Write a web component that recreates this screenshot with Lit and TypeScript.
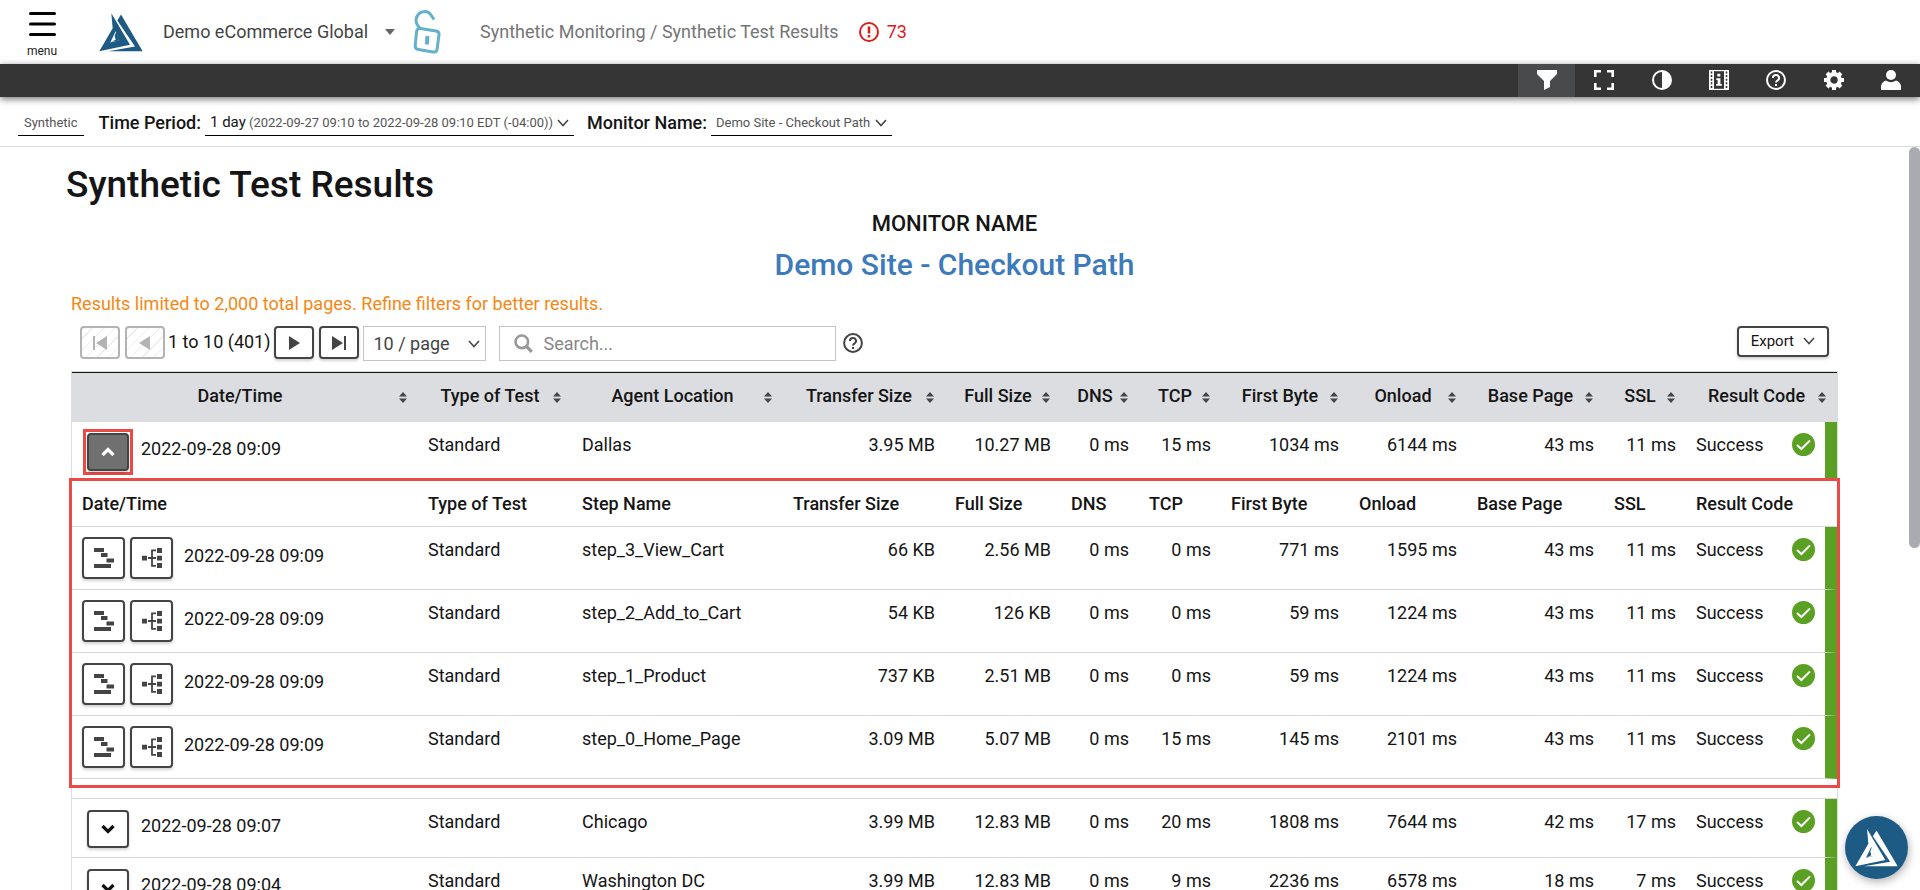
import { LitElement, html, svg, css, nothing } from "lit";
import { customElement, state } from "lit/decorators.js";

interface Result {
  time: string;
  type: string;
  name: string;
  values: string[];
  code: string;
  steps?: Result[];
}

const row = (time: string, name: string, values: string[], steps?: Result[]): Result => ({
  time,
  type: "Standard",
  name,
  values,
  code: "Success",
  steps,
});

const COLUMNS = [
  { label: "Date/Time", width: 346 },
  { label: "Type of Test", width: 154 },
  { label: "Agent Location", width: 211 },
  { label: "Transfer Size", width: 162 },
  { label: "Full Size", width: 116 },
  { label: "DNS", width: 78 },
  { label: "TCP", width: 82 },
  { label: "First Byte", width: 128 },
  { label: "Onload", width: 118 },
  { label: "Base Page", width: 137 },
  { label: "SSL", width: 82 },
  { label: "Result Code", width: 151 },
];

const RESULTS: Result[] = [
  row("2022-09-28 09:09", "Dallas", ["3.95 MB", "10.27 MB", "0 ms", "15 ms", "1034 ms", "6144 ms", "43 ms", "11 ms"], [
    row("2022-09-28 09:09", "step_3_View_Cart", ["66 KB", "2.56 MB", "0 ms", "0 ms", "771 ms", "1595 ms", "43 ms", "11 ms"]),
    row("2022-09-28 09:09", "step_2_Add_to_Cart", ["54 KB", "126 KB", "0 ms", "0 ms", "59 ms", "1224 ms", "43 ms", "11 ms"]),
    row("2022-09-28 09:09", "step_1_Product", ["737 KB", "2.51 MB", "0 ms", "0 ms", "59 ms", "1224 ms", "43 ms", "11 ms"]),
    row("2022-09-28 09:09", "step_0_Home_Page", ["3.09 MB", "5.07 MB", "0 ms", "15 ms", "145 ms", "2101 ms", "43 ms", "11 ms"]),
  ]),
  row("2022-09-28 09:07", "Chicago", ["3.99 MB", "12.83 MB", "0 ms", "20 ms", "1808 ms", "7644 ms", "42 ms", "17 ms"]),
  row("2022-09-28 09:04", "Washington DC", ["3.99 MB", "12.83 MB", "0 ms", "9 ms", "2236 ms", "6578 ms", "18 ms", "7 ms"]),
];

const logoShape = svg`
  <path fill-rule="evenodd" d="M1 114 L41 45 L37 0 L93 95 Z M34 88 L50 54 L61 81 Z"/>
  <path d="M47 68 L52 55 L62 82 L38 86 L50 80 Z"/>
  <path d="M55 22 L66 4 L131 114 L28 114 L108 100 Z"/>`;

const logo = html`<svg width="44" height="39" viewBox="0 0 132 116" fill="#1d5b84" aria-hidden="true">${logoShape}</svg>`;

const chevron = html`<svg width="12" height="8" viewBox="0 0 12 8" fill="none" stroke="#444" stroke-width="1.5" aria-hidden="true"><path d="M1 1 L6 6.6 L11 1"/></svg>`;

const questionIcon = html`<svg width="20" height="20" viewBox="0 0 20 20" fill="none" stroke="currentColor" stroke-width="2" aria-hidden="true">
  <circle cx="10" cy="10" r="8.9"/>
  <path d="M7 8 A3 2.9 0 1 1 11.6 10.3 Q10 11.2 10 12.6"/>
  <path d="M10 14 V16"/></svg>`;

const checkIcon = html`<svg class="check" width="23" height="23" viewBox="0 0 23 23" aria-hidden="true">
  <circle cx="11.5" cy="11.5" r="11.5" fill="#5aa023"/>
  <path d="M5 12 L9.4 16 L18 7.4" fill="none" stroke="#fff" stroke-width="2"/></svg>`;

const sortIcon = html`<svg width="8" height="11" viewBox="0 0 8 11" fill="#444" aria-hidden="true"><path d="M0 4.4 L4 0 L8 4.4 Z M0 6.6 L4 11 L8 6.6 Z"/></svg>`;

const waterfallIcon = html`<svg width="20" height="20" viewBox="0 0 20 20" fill="#444" aria-hidden="true">
  <path d="M0 0 H10 V4 H0 Z M7 5 H13.500 V9 H7 Z M12.500 10.500 H20 V14.500 H12.500 Z M0 16 H17 V20 H0 Z"/></svg>`;

const treeIcon = html`<svg width="20" height="20" viewBox="0 0 20 20" aria-hidden="true">
  <path fill="#444" d="M0 7.800 H5 V12.500 H0 Z M15 0 H20 V5 H15 Z M15 7.800 H20 V12.500 H15 Z M15 15 H20 V20 H15 Z"/>
  <path fill="none" stroke="#444" stroke-width="1.800" d="M6 10 H14 M14 2.300 H10 V17.800 H14"/></svg>`;

const TOOLS = [
  {
    label: "Filters",
    icon: svg`<path fill="#fff" d="M0 0 H20 V4 L13 11 V17 L7 20 V11 L0 4 Z"/>`,
  },
  {
    label: "Full screen",
    icon: svg`<path fill="none" stroke="#fff" stroke-width="2.6" d="M1.300 7 V1.300 H7 M13 1.300 H18.700 V7 M18.700 13 V18.700 H13 M7 18.700 H1.300 V13"/>`,
  },
  {
    label: "Contrast",
    icon: svg`<circle cx="10" cy="10" r="9" fill="none" stroke="#fff" stroke-width="2"/><path fill="#fff" d="M10 1 A9 9 0 0 1 10 19 Z"/>`,
  },
  {
    label: "Session info",
    icon: svg`<rect width="20" height="20" fill="#fff"/><rect x="5" y="1.200" width="10" height="17.600" fill="#353535"/>
      <path stroke="#353535" stroke-width="1.600" stroke-dasharray="2 1.600" d="M2.500 1.500 V19 M17.500 1.500 V19"/>
      <path fill="#fff" d="M8.300 3.800 H11.300 V6.600 H8.300 Z M7.300 8.200 H11.400 V14 H12.800 V15.800 H7.200 V14 H8.600 V10 H7.300 Z"/>`,
  },
  {
    label: "Help",
    icon: svg`<circle cx="10" cy="10" r="9" fill="none" stroke="#fff" stroke-width="2"/>
      <path fill="none" stroke="#fff" stroke-width="2" d="M7 8 A3 2.900 0 1 1 11.600 10.300 Q10 11.200 10 12.600 M10 14 V16"/>`,
  },
  {
    label: "Settings",
    icon: svg`<circle cx="10" cy="10" r="5.800" fill="none" stroke="#fff" stroke-width="4.200"/>
      <g stroke="#fff" stroke-width="4"><path d="M10 0 V3 M10 17 V20 M0 10 H3 M17 10 H20 M3 3 L5 5 M15 15 L17 17 M3 17 L5 15 M15 5 L17 3"/></g>`,
  },
  {
    label: "Account",
    icon: svg`<circle cx="10" cy="5" r="5" fill="#fff"/><path fill="#fff" d="M0 20 V16 Q1 11.500 5 10.500 Q10 14 15 10.500 Q19 11.500 20 16 V20 Z"/>`,
  },
];

@customElement("app-root")
export class AppRoot extends LitElement {
  @state() private open = new Set<number>([0]);

  static styles = css`
    :host {
      display: flex;
      flex-direction: column;
      height: 100vh;
      overflow: hidden;
      background: #fff;
      color: #151515;
      font: 18px/24px Roboto, "Liberation Sans", sans-serif;
    }
    * { box-sizing: border-box; }
    svg { display: block; flex: none; }
    button, input, select { font: inherit; color: inherit; margin: 0; padding: 0; }
    button { background: none; border: 0; cursor: pointer; }
    a { color: inherit; text-decoration: none; }

    .header { display: flex; align-items: center; height: 64px; padding: 0 26px; color: #444; flex: none; }
    .menu { display: flex; flex-direction: column; align-items: center; gap: 7px; width: 32px; padding-top: 7px; font-size: 12px; line-height: 16px; color: #222; }
    .brand { margin-left: 41px; }
    .account { display: flex; align-items: center; gap: 17px; margin-left: 20px; white-space: nowrap; }
    .lock { margin-left: 17px; }
    .crumbs { margin-left: 38px; color: #757575; white-space: nowrap; }
    .alerts { display: flex; align-items: center; gap: 8px; margin-left: 20px; color: #d9201d; }

    .toolbar { display: flex; justify-content: flex-end; height: 33px; background: #353535; box-shadow: 0 2px 7px rgba(0, 0, 0, 0.55); flex: none; z-index: 1; }
    .tools { display: grid; grid-template-columns: repeat(7, 1fr); width: 402px; }
    .tool { display: grid; place-items: center; padding-bottom: 1px; }
    .tool.active { background: #484a4c; }

    .filters { display: flex; align-items: flex-end; height: 50px; padding: 0 18px 10px; border-bottom: 1px solid #d8dadb; flex: none; white-space: nowrap; }
    .filter { display: flex; align-items: center; gap: 4px; margin-left: 15px; font-weight: 500; }
    .filter + .filter { margin-left: 13px; }
    .field { display: flex; align-items: center; gap: 4px; height: 26px; padding: 0 6px; border-bottom: 1px solid #000; font-size: 13px; font-weight: 400; color: #555; }
    .filter .field { padding: 0 5px; }
    .period { font-size: 15px; color: #151515; }
    .field select { appearance: none; border: 0; background: none; outline: 0; }

    .body { display: flex; flex: 1; min-height: 0; }
    .content { flex: 1; min-width: 0; overflow: hidden; padding: 16px 66px 0; }
    .track { width: 11px; flex: none; }
    .thumb { height: 54%; border-radius: 6px; background: #a9abb0; }
    h1 { margin: 0; font-size: 37px; line-height: 44px; font-weight: 500; }
    .monitor { display: flex; flex-direction: column; align-items: center; gap: 7px; padding-top: 3px; }
    .monitor-label { font-size: 22px; line-height: 28px; font-weight: 500; }
    .monitor-name { margin: 0; font-size: 30px; line-height: 40px; font-weight: 500; color: #3d7abb; }
    .notice { margin: 7px 5px 10px; color: #f68712; }

    .controls { display: flex; align-items: flex-start; gap: 3px; padding: 0 14px; height: 45px; }
    .pair { display: flex; gap: 5px; }
    .box { display: grid; place-items: center; border: 2px solid #444; border-radius: 4px; background: #fff; box-shadow: 0 2px 3px rgba(0, 0, 0, 0.18); }
    .page { width: 40px; height: 33px; }
    .page:disabled { border-color: #b3b3b3; box-shadow: none; background: repeating-linear-gradient(135deg, #fff 0 7px, #ececec 7px 8px); }
    .range { line-height: 32px; white-space: nowrap; }
    .size { display: grid; grid-template-columns: 1fr 12px; align-items: center; width: 123px; height: 35px; margin-left: 1px; padding: 0 5px 0 10px; border: 1px solid #c4c4c4; color: #444; }
    .size select { grid-area: 1 / 1 / 2 / 3; width: 100%; appearance: none; border: 0; background: none; outline: 0; }
    .size svg { grid-area: 1 / 2; pointer-events: none; }
    .search { display: flex; align-items: center; gap: 11px; width: 337px; height: 35px; margin: 0 4px 0 10px; padding: 0 14px; border: 1px solid #c4c4c4; }
    .search input { flex: 1; min-width: 0; border: 0; outline: 0; background: none; }
    .search input::placeholder { color: #888; opacity: 1; }
    .help { color: #444; padding-top: 7px; }
    .export { display: flex; align-items: center; gap: 9px; height: 31px; margin-left: auto; padding: 0 12px 2px; font-size: 15px; }

    .frame { margin: 0 5px; border: 1px solid #dadcde; }
    table { width: 100%; table-layout: fixed; border-collapse: separate; border-spacing: 0; }
    .results { border-top: 1px solid #111; }
    th, td { padding: 11px 10px 0; text-align: left; vertical-align: top; white-space: nowrap; border-bottom: 1px solid #d6d6d6; }
    th { font-weight: 500; }
    .results > thead th { height: 49px; background: #dcdde0; border: 0; }
    .sortable { display: flex; align-items: center; justify-content: space-between; }
    .label { flex: 1; text-align: center; }
    .sort { padding: 2px 0 0 1px; width: 10px; }
    .main > td { height: 59px; }
    .num { text-align: right; }
    .code { border-right: 12px solid #5aa023; }
    .code-line { display: flex; justify-content: space-between; align-items: center; height: 23px; }
    .when { display: flex; align-items: flex-start; gap: 12px; padding-left: 5px; line-height: 32px; }
    .toggle { width: 42px; height: 38px; }
    .toggle.open { background: #707070; }
    .marked { margin: -4px; padding: 1px; border: 3px solid #ea4b47; }

    .detail { padding: 0 0 13px; }
    .steps { outline: 3px solid #ea4b47; padding-bottom: 6px; position: relative; }
    .steps th { height: 46px; }
    .steps td { height: 63px; }
    .steps .when { gap: 5px; margin-top: -1px; padding: 0; line-height: 38px; }
    .steps .when time { margin-left: 6px; }
    .step { width: 43px; height: 42px; }

    .badge { position: fixed; right: 12px; bottom: 11px; width: 63px; height: 63px; border-radius: 50%; background: #1d5b84; box-shadow: 1px 3px 8px rgba(0, 0, 0, 0.3); display: grid; place-items: center; z-index: 2; }
  `;

  private toggle(index: number) {
    const next = new Set(this.open);
    next.has(index) ? next.delete(index) : next.add(index);
    this.open = next;
  }

  private cols() {
    return html`<colgroup>${COLUMNS.map((c) => html`<col width=${c.width} />`)}</colgroup>`;
  }

  private cells(r: Result) {
    return html`
      <td>${r.type}</td>
      <td>${r.name}</td>
      ${r.values.map((v) => html`<td class="num">${v}</td>`)}
      <td class="code"><div class="code-line"><span>${r.code}</span>${checkIcon}</div></td>`;
  }

  private steps(list: Result[]) {
    return html`<tr>
      <td class="detail" colspan="12">
        <div class="steps">
          <table>
            ${this.cols()}
            <thead>
              <tr>${COLUMNS.map((c) => html`<th scope="col">${c.label === "Agent Location" ? "Step Name" : c.label}</th>`)}</tr>
            </thead>
            <tbody>
              ${list.map(
                (s) => html`<tr>
                  <td>
                    <div class="when">
                      <button class="box step" aria-label="Waterfall for ${s.name}">${waterfallIcon}</button>
                      <button class="box step" aria-label="Breakdown for ${s.name}">${treeIcon}</button>
                      <time>${s.time}</time>
                    </div>
                  </td>
                  ${this.cells(s)}
                </tr>`
              )}
            </tbody>
          </table>
        </div>
      </td>
    </tr>`;
  }

  private result(r: Result, i: number) {
    const open = this.open.has(i);
    return html`<tr class="main">
        <td>
          <div class="when">
            <span class=${open ? "marked" : ""}>
              <button class="box toggle ${open ? "open" : ""}" aria-expanded=${open} aria-label="Steps for ${r.name}" @click=${() => this.toggle(i)}>
                <svg width="14" height="10" viewBox="0 0 14 10" fill="none" stroke=${open ? "#fff" : "#111"} stroke-width="3.200">
                  <path d=${open ? "M1.500 8 L7 2.500 L12.500 8" : "M1.500 2 L7 7.500 L12.500 2"} />
                </svg>
              </button>
            </span>
            <time>${r.time}</time>
          </div>
        </td>
        ${this.cells(r)}
      </tr>
      ${open && r.steps ? this.steps(r.steps) : nothing}`;
  }

  render() {
    return html`
      <header class="header">
        <button class="menu">
          <svg width="27" height="24" viewBox="0 0 27 24" stroke="#000" stroke-width="3" stroke-linecap="round" aria-hidden="true"><path d="M1.500 1.500 H25.500 M1.500 12 H25.500 M1.500 22.500 H25.500"/></svg>
          menu
        </button>
        <a class="brand" href="#" aria-label="Home">${logo}</a>
        <button class="account">
          Demo eCommerce Global
          <svg width="10" height="6" viewBox="0 0 10 6" fill="#666" aria-hidden="true"><path d="M0 0 H10 L5 6 Z"/></svg>
        </button>
        <svg class="lock" width="30" height="48" viewBox="0 0 30 48" fill="none" stroke="#64b1c9" stroke-width="3" aria-hidden="true">
          <path d="M9 21 Q4 17 4 12 Q5 4 13 3.500 Q17 3.500 19 7 L22 11.500"/>
          <path d="M8.500 20.500 L24 23 Q27.500 23.500 27 27 L25 41.500 Q24.500 44.500 21 44 L6.500 41.500 Q3 41 3.200 37.500 L4.500 24 Q5 20 8.500 20.500 Z"/>
          <path stroke-width="4" d="M15.500 28 L14.800 36.500"/>
        </svg>
        <nav class="crumbs" aria-label="Breadcrumb"><a href="#">Synthetic Monitoring</a> / <a href="#">Synthetic Test Results</a></nav>
        <a class="alerts" href="#">
          <svg width="20" height="20" viewBox="0 0 20 20" fill="none" stroke="#d9201d" stroke-width="2" aria-hidden="true"><circle cx="10" cy="10" r="9"/><path stroke-width="2.600" d="M10 4.500 V11.500 M10 13 V15.500"/></svg>
          73
        </a>
      </header>

      <div class="toolbar">
        <div class="tools" role="toolbar">
          ${TOOLS.map(
            (t, i) => html`<button class="tool ${i === 0 ? "active" : ""}" aria-label=${t.label}>
              <svg width="20" height="20" viewBox="0 0 20 20" aria-hidden="true">${t.icon}</svg>
            </button>`
          )}
        </div>
      </div>

      <div class="filters">
        <span class="field">Synthetic</span>
        <div class="filter">
          <span id="period">Time Period:</span>
          <button class="field" aria-describedby="period">
            <span><span class="period">1 day</span> (2022-09-27 09:10 to 2022-09-28 09:10 EDT (-04:00))</span>${chevron}
          </button>
        </div>
        <div class="filter">
          <label for="monitor">Monitor Name:</label>
          <span class="field">
            <select id="monitor"><option>Demo Site - Checkout Path</option></select>${chevron}
          </span>
        </div>
      </div>

      <div class="body">
        <main class="content">
          <h1>Synthetic Test Results</h1>
          <div class="monitor">
            <span class="monitor-label">MONITOR NAME</span>
            <h2 class="monitor-name">Demo Site - Checkout Path</h2>
          </div>
          <p class="notice">Results limited to 2,000 total pages. Refine filters for better results.</p>
          <div class="controls">
            <div class="pair">
              <button class="box page" disabled aria-label="First page"><svg width="16" height="16" viewBox="0 0 16 16" fill="#b3b3b3"><path d="M1 1 H3 V15 H1 Z M15 1 V15 L4 8 Z"/></svg></button>
              <button class="box page" disabled aria-label="Previous page"><svg width="16" height="16" viewBox="0 0 16 16" fill="#b3b3b3"><path d="M13 1 V15 L2 8 Z"/></svg></button>
            </div>
            <span class="range">1 to 10 (401)</span>
            <div class="pair">
              <button class="box page" aria-label="Next page"><svg width="16" height="16" viewBox="0 0 16 16" fill="#444"><path d="M3 1 V15 L14 8 Z"/></svg></button>
              <button class="box page" aria-label="Last page"><svg width="16" height="16" viewBox="0 0 16 16" fill="#444"><path d="M13 1 H15 V15 H13 Z M1 1 V15 L12 8 Z"/></svg></button>
            </div>
            <span class="size">
              <select aria-label="Rows per page"><option>10 / page</option></select>${chevron}
            </span>
            <label class="search">
              <svg width="19" height="19" viewBox="0 0 19 19" fill="none" stroke="#999" stroke-width="2.600" aria-hidden="true"><circle cx="7.800" cy="7.800" r="6.300"/><path stroke-width="3.200" d="M12.500 12.500 L17.800 17.800"/></svg>
              <input type="search" placeholder="Search..." aria-label="Search" />
            </label>
            <button class="help" aria-label="Search help">${questionIcon}</button>
            <button class="box export">Export ${chevron}</button>
          </div>
          <div class="frame">
            <table class="results">
              ${this.cols()}
              <thead>
                <tr>
                  ${COLUMNS.map(
                    (c) => html`<th scope="col">
                      <div class="sortable"><span class="label">${c.label}</span><button class="sort" aria-label="Sort by ${c.label}">${sortIcon}</button></div>
                    </th>`
                  )}
                </tr>
              </thead>
              <tbody>${RESULTS.map((r, i) => this.result(r, i))}</tbody>
            </table>
          </div>
        </main>
        <div class="track"><div class="thumb"></div></div>
      </div>

      <button class="badge" aria-label="Open assistant">
        <svg width="43" height="38" viewBox="0 0 132 116" fill="#fff" aria-hidden="true">${logoShape}</svg>
      </button>
    `;
  }
}
